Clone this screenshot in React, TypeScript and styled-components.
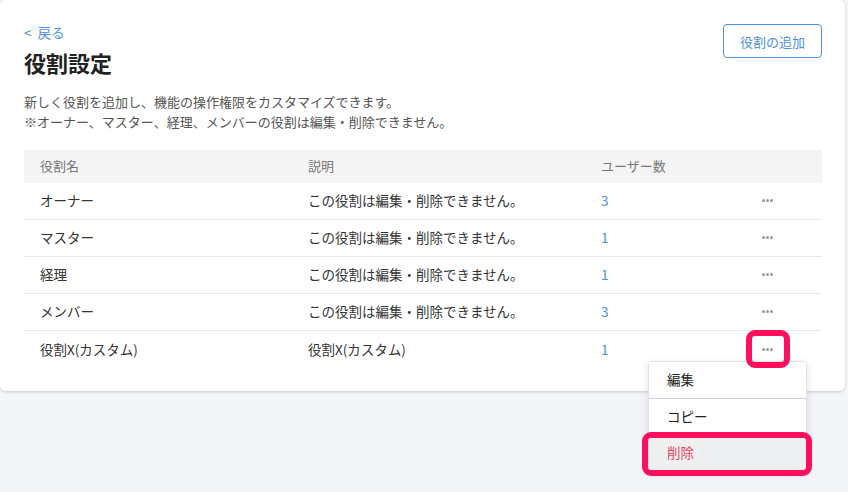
import React from "react";
import styled, { createGlobalStyle } from "styled-components";

const Global = createGlobalStyle`
  html, body { margin: 0; padding: 0; background: #f4f5f9; height: 100%; }
  #root { min-height: 100%; }
  body { font-family: "Noto Sans CJK JP", "Noto Sans", sans-serif; color: #333; }
  * { box-sizing: border-box; }
`;

const Page = styled.div`
  min-height: 492px;
  background: #f4f5f9;
`;

const Card = styled.div`
  position: relative;
  width: 845px;
  background: #fff;
  border-radius: 6px;
  box-shadow: 0 1px 3px rgba(0, 0, 0, 0.18);
  padding: 22px 23px 23px 24px;
`;

const Header = styled.div`
  display: flex;
  justify-content: space-between;
  align-items: flex-start;
`;

const TitleBlock = styled.div`
  display: flex;
  flex-direction: column;
`;

const BackLink = styled.a`
  display: flex;
  align-items: center;
  font-size: 13.5px;
  line-height: 20px;
  color: #4a8fe7;
  text-decoration: none;
`;

const Chevron = styled.span`
  margin-right: 6px;
`;

const Title = styled.h1`
  margin: 5px 0 0;
  font-size: 22px;
  line-height: 30px;
  font-weight: 700;
  color: #222;
`;

const AddButton = styled.button`
  margin-top: 2px;
  width: 99px;
  height: 34px;
  border: 1px solid #4a8fe7;
  border-radius: 4px;
  background: #fff;
  color: #4a8fe7;
  font-family: inherit;
  font-size: 13px;
`;

const Description = styled.p`
  margin: 15px 0 0;
  font-size: 13px;
  line-height: 20px;
  color: #555;
`;

const Table = styled.div`
  margin-top: 18px;
  display: flex;
  flex-direction: column;
`;

const Row = styled.div<{ $head?: boolean; $last?: boolean }>`
  display: grid;
  grid-template-columns: 268px 293px 1fr 44px;
  padding-right: 32px;
  height: ${(p) => (p.$head ? "33px" : "37px")};
  align-items: center;
  background: ${(p) => (p.$head ? "#f4f4f4" : "#fff")};
  border-bottom: ${(p) => (p.$last || p.$head ? "none" : "1px solid #e8e8e8")};
  font-size: ${(p) => (p.$head ? "13px" : "13.5px")};
  color: ${(p) => (p.$head ? "#777" : "#333")};
`;

const Cell = styled.div`
  padding-left: 16px;
  white-space: nowrap;
  padding-bottom: 2px;
`;

const Count = styled(Cell)`
  color: #4a8fe7;
`;

const ActionCell = styled.div`
  position: relative;
  height: 100%;
  display: flex;
  align-items: center;
  justify-content: center;
`;

const Dots = styled.span`
  display: flex;
  gap: 1px;
  margin-left: -1px;
  margin-bottom: 1px;
  & > i {
    width: 3px;
    height: 3px;
    border-radius: 50%;
    background: #9a9a9a;
  }
`;

const Highlight = styled.div<{ $t: number; $l: number; $r: number; $b: number }>`
  position: absolute;
  top: ${(p) => p.$t}px;
  left: ${(p) => p.$l}px;
  right: ${(p) => p.$r}px;
  bottom: ${(p) => p.$b}px;
  border: 6px solid #ff0f5c;
  border-radius: 9px;
  z-index: 3;
  pointer-events: none;
`;

const Menu = styled.div`
  position: absolute;
  top: 30px;
  left: -98px;
  width: 159px;
  background: #fff;
  border: 1px solid #e2e2e2;
  border-radius: 4px;
  box-shadow: 0 2px 8px rgba(0, 0, 0, 0.12);
  z-index: 2;
  display: flex;
  flex-direction: column;
`;

const MenuItem = styled.div<{ $danger?: boolean; $divider?: boolean; $active?: boolean }>`
  position: relative;
  flex: none;
  height: ${(p) => (p.$divider ? "37px" : "36px")};
  padding: 0 0 2px 18px;
  display: flex;
  align-items: center;
  font-size: 13.5px;
  color: ${(p) => (p.$danger ? "#e2455f" : "#222")};
  background: ${(p) => (p.$active ? "#eeeff1" : "#fff")};
  border-bottom: ${(p) => (p.$divider ? "1px solid #cfcfcf" : "none")};
`;

const rows = [
  { name: "オーナー", desc: "この役割は編集・削除できません。", count: 3 },
  { name: "マスター", desc: "この役割は編集・削除できません。", count: 1 },
  { name: "経理", desc: "この役割は編集・削除できません。", count: 1 },
  { name: "メンバー", desc: "この役割は編集・削除できません。", count: 3 },
  { name: "役割X(カスタム)", desc: "役割X(カスタム)", count: 1 },
];

const DotsIcon = () => (
  <Dots>
    <i />
    <i />
    <i />
  </Dots>
);

export default function App() {
  return (
    <Page>
      <Global />
      <Card>
        <Header>
          <TitleBlock>
            <BackLink href="#">
              <Chevron>&lt;</Chevron>戻る
            </BackLink>
            <Title>役割設定</Title>
          </TitleBlock>
          <AddButton>役割の追加</AddButton>
        </Header>
        <Description>
          新しく役割を追加し、機能の操作権限をカスタマイズできます。
          <br />
          ※オーナー、マスター、経理、メンバーの役割は編集・削除できません。
        </Description>
        <Table>
          <Row $head>
            <Cell>役割名</Cell>
            <Cell>説明</Cell>
            <Cell>ユーザー数</Cell>
            <div />
          </Row>
          {rows.map((r, i) => {
            const last = i === rows.length - 1;
            return (
              <Row key={i} $last={last}>
                <Cell>{r.name}</Cell>
                <Cell>{r.desc}</Cell>
                <Count>{r.count}</Count>
                <ActionCell>
                  <DotsIcon />
                  {last && (
                    <>
                      <Highlight $t={-1} $l={0} $r={0} $b={0} />
                      <Menu>
                        <MenuItem $divider>編集</MenuItem>
                        <MenuItem>コピー</MenuItem>
                        <MenuItem $danger $active>
                          削除
                          <Highlight $t={-3} $l={-7} $r={-6} $b={-5} />
                        </MenuItem>
                      </Menu>
                    </>
                  )}
                </ActionCell>
              </Row>
            );
          })}
        </Table>
      </Card>
    </Page>
  );
}
